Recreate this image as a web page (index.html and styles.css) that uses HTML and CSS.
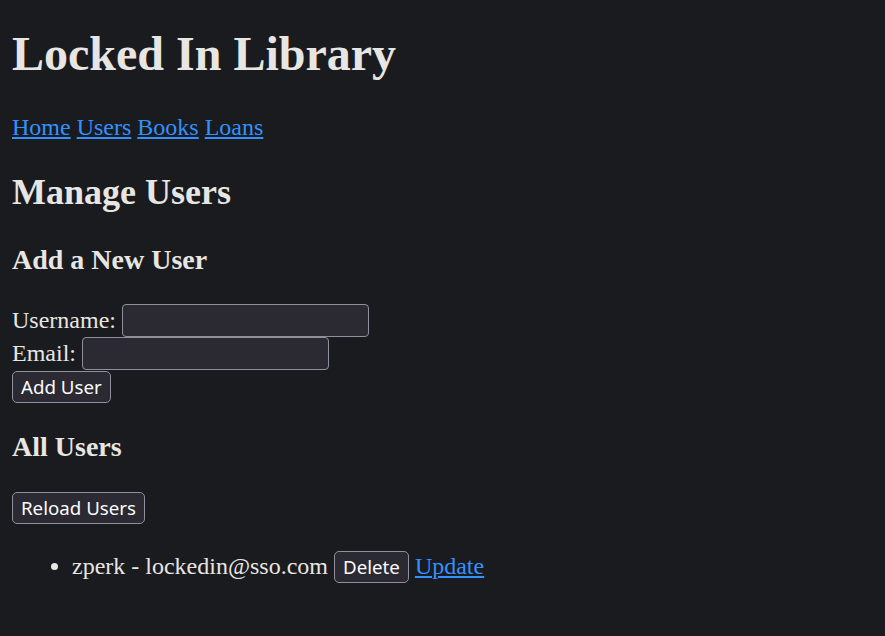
FILE: index.html
```html
<!DOCTYPE html>
<html>
<head>
<meta charset="utf-8">
<title>Locked In Library</title>
<link rel="stylesheet" href="styles.css">
</head>
<body>
<h1 class="title">Locked In Library</h1>
<nav class="nav"><a href="#">Home</a> <a href="#">Users</a> <a href="#">Books</a> <a href="#">Loans</a></nav>
<h2 class="page-title">Manage Users</h2>
<h3 class="section-title">Add a New User</h3>
<form class="user-form">
  <div class="form-row"><label>Username:</label><input class="field" type="text"></div>
  <div class="form-row"><label>Email:</label><input class="field" type="email"></div>
  <div class="form-row form-actions"><button class="btn" type="button">Add User</button></div>
</form>
<h3 class="section-title section-gap">All Users</h3>
<button class="btn" type="button">Reload Users</button>
<ul class="user-list">
  <li>zperk - lockedin@sso.com <button class="btn btn-inline" type="button">Delete</button> <a href="#">Update</a></li>
</ul>
</body>
</html>
```
FILE: styles.css
```css
html {
  background: #1a1b1e;
}
body {
  margin: 0;
  padding: 0 12px;
  background: #1a1b1e;
  color: #e8e6e3;
  font-family: "Liberation Serif", "Times New Roman", serif;
  font-size: 24px;
  line-height: 28px;
}
a {
  color: #3391ff;
  text-decoration: underline;
}
.title {
  margin: 26px 0 0;
  font-size: 48px;
  line-height: 55px;
  font-weight: bold;
}
.nav {
  display: block;
  margin-top: 32px;
}
.page-title {
  margin: 31px 0 0;
  font-size: 36px;
  line-height: 41px;
}
.section-title {
  margin: 31px 0 0;
  font-size: 28px;
  line-height: 32px;
}
.section-gap {
  margin-top: 28.5px;
  margin-bottom: 29px;
}
.user-form {
  margin: 27.5px 0 0;
}
.form-row {
  display: flex;
  align-items: center;
  gap: 6px;
  height: 33px;
}
.form-actions {
  height: 32px;
  margin-top: 1px;
}
.field {
  box-sizing: border-box;
  width: 247px;
  height: 33px;
  margin: 0;
  background: #2b2a33;
  border: 1px solid #8f8f9d;
  border-radius: 4px;
  color: #fbfbfe;
  font-family: "Noto Sans", sans-serif;
  font-size: 18.5px;
  padding: 2px 4px;
}
.btn {
  box-sizing: border-box;
  height: 32px;
  margin: 0;
  padding: 0 8px;
  background: #2b2a33;
  border: 1px solid #8f8f9d;
  border-radius: 5px;
  color: #fbfbfe;
  font-family: "Noto Sans", sans-serif;
  font-size: 18.7px;
  line-height: 26px;
}
.user-list {
  margin: 27px 0 0;
  padding-left: 60px;
}
.btn-inline {
  vertical-align: baseline;
}
```
